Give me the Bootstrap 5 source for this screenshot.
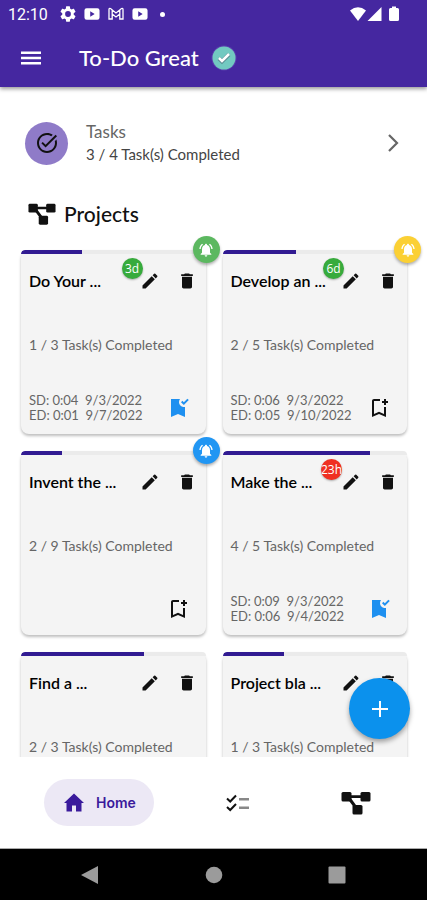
<!DOCTYPE html>
<html lang="en">
<head>
<meta charset="utf-8">
<meta name="viewport" content="width=device-width, initial-scale=1">
<title>To-Do Great</title>
<link href="https://cdn.jsdelivr.net/npm/bootstrap@5.3.0/dist/css/bootstrap.min.css" rel="stylesheet">
<style>
  body { font-family: Lato, "Open Sans", sans-serif; background: #fff; color: #111; }
  svg { display: block; fill: currentColor; flex: none; }
  .i-16 { width: 16px; height: 16px; }
  .i-20 { width: 20px; height: 20px; }
  .i-24 { width: 24px; height: 24px; }
  .i-28 { width: 28px; height: 28px; }
  .i-30 { width: 30px; height: 30px; }
  .plain { border: 0; background: none; padding: 0; color: inherit; }

  .app-head { background: #4527a0; color: #fff; box-shadow: 0 2px 4px rgba(0,0,0,.4); z-index: 2; }
  .status { height: 28px; padding: 0 25px 0 8px; font: 16px Roboto, sans-serif; }
  .status-icons { gap: 8px; margin-left: 12px; }
  .dot { width: 5px; height: 5px; }
  .toolbar { height: 59px; padding: 0 19px; }
  .app-title { font-size: 22px; line-height: 28px; margin: 0 12px 0 36px; font-weight: 500; }
  .logo { width: 26px; height: 26px; }

  .tasks-link { padding: 34px 20px 35px 25px; color: #555; }
  .tasks-disc { width: 43px; height: 43px; background: #8f7bc8; color: #111; margin-right: 18px; }
  .tasks-name { font-size: 17px; line-height: 22px; color: #666; }
  .tasks-count { font-size: 15px; line-height: 22px; color: #444; }
  .projects-title { padding: 0 28px; font-size: 21px; line-height: 28px; font-weight: 500; gap: 8px; }

  .scroller { min-height: 0; overflow-y: auto; scrollbar-width: none; padding: 22px 20px 16px 21px; }
  .scroller::-webkit-scrollbar { display: none; }
  .scroller > .row { --bs-gutter-x: 17px; --bs-gutter-y: 17px; }
  .project { min-height: 184px; background: #f4f4f4; border-radius: 8px; box-shadow: 0 2px 3px rgba(0,0,0,.26); }
  .project .progress { height: 4px; border-radius: 4px 4px 0 0; background: #ebebeb; }
  .project .progress-bar { background: #311b92; border-radius: 4px 0 0 0; }
  .project-top { padding: 15px 9px 0 8px; }
  .project-name { font-size: 16px; line-height: 24px; font-weight: 600; margin: 0; color: #000; }
  .actions { gap: 17px; }
  .project-count { font-size: 14px; line-height: 20px; color: #666; padding: 0 8px; margin: 42px 0 0; }
  .project-foot { padding: 0 16px 11px 8px; min-height: 41px; }
  .dates { font-size: 13px; line-height: 15px; color: #666; margin: 0; white-space: pre; }
  .blue { color: #1e90f0; }
  .bell { width: 27px; height: 27px; top: -14px; right: -14px; color: #fff; box-shadow: 0 2px 3px rgba(0,0,0,.3); z-index: 1; }
  .bell-green { background: #5cb860; }
  .bell-yellow { background: #fbd034; }
  .bell-blue { background: #2196f3; }
  .due { width: 21px; height: 21px; top: 8px; right: 63px; color: #fff; background: #37ab3c; font: 12px "Open Sans", Roboto, sans-serif; box-shadow: 0 1px 2px rgba(0,0,0,.3); overflow: hidden; }
  .due-red { background: #ef2f22; right: 65px; }

  .fab { width: 61px; height: 61px; right: 17px; bottom: 18px; background: #0b91ed; color: #fff; box-shadow: 0 3px 5px rgba(0,0,0,.35); z-index: 3; }
  .tabs { height: 92px; padding: 0 38px 0 44px; border-bottom: 1px solid #aaa; }
  .tabs .plain { height: 47px; padding: 0 18px; border-radius: 24px; }
  .tabs .home-tab { background: #ece8f5; color: #3a1a9c; font: 600 14px Inter, Roboto, sans-serif; gap: 10px; }
  .sysbar { height: 51px; background: #000; color: #9b9b9b; padding: 0 28px; }
</style>
<script src="https://cdn.jsdelivr.net/npm/bootstrap@5.3.0/dist/js/bootstrap.bundle.min.js" defer></script>
</head>
<body class="vh-100 d-flex flex-column overflow-hidden">

<svg class="d-none" aria-hidden="true">
  <symbol id="edit" viewBox="0 0 24 24"><path d="M3 17.25V21h3.75L17.81 9.94l-3.75-3.75L3 17.25zM20.71 7.04c.39-.39.39-1.02 0-1.41l-2.34-2.34a1 1 0 0 0-1.41 0l-1.83 1.83 3.75 3.75 1.83-1.83z"/></symbol>
  <symbol id="trash" viewBox="0 0 24 24"><path d="M6 19c0 1.1.9 2 2 2h8c1.1 0 2-.9 2-2V7H6v12zM19 4h-3.5l-1-1h-5l-1 1H5v2h14V4z"/></symbol>
  <symbol id="ring" viewBox="0 0 24 24"><path d="M7.58 4.08L6.15 2.65C3.75 4.48 2.17 7.3 2.03 10.5h2c.15-2.65 1.51-4.97 3.55-6.42zm12.39 6.42h2c-.15-3.2-1.73-6.02-4.12-7.85l-1.42 1.43c2.02 1.45 3.39 3.77 3.54 6.42zM18 11c0-3.07-1.64-5.64-4.5-6.32V4c0-.83-.67-1.5-1.5-1.5s-1.5.67-1.5 1.5v.68C7.63 5.36 6 7.92 6 11v5l-2 2v1h16v-1l-2-2v-5zm-6 11c1.1 0 2-.9 2-2h-4c0 1.1.9 2 2 2z"/></symbol>
  <symbol id="saved" viewBox="0 0 24 24"><path d="M19 21l-7-3-7 3V3h9c-.63.84-1 1.87-1 3 0 2.76 2.24 5 5 5 .34 0 .68-.03 1-.1V21zM17.83 9L15 6.17l1.41-1.41 1.41 1.41 3.54-3.54 1.41 1.41L17.83 9z"/></symbol>
  <symbol id="save" viewBox="0 0 24 24"><path d="M17 11v6.97l-5-2.14-5 2.14V5h6V3H7c-1.1 0-2 .9-2 2v16l7-3 7 3V11h-2zm4-4h-2v2h-2V7h-2V5h2V3h2v2h2v2z"/></symbol>
  <symbol id="tree" viewBox="0 0 30 24"><rect x=".5" y="1" width="10" height="9.500" rx="1.500"/><rect x="19.500" y="1" width="10" height="9.500" rx="1.500"/><rect x="11.500" y="14" width="10" height="9.500" rx="1.500"/><path d="M8 4.300h14v2.600H8zM6.300 7.500l2.600-1.700 7 9.500-2.600 1.700z"/></symbol>
  <symbol id="tube" viewBox="0 0 18 14"><path fill-rule="evenodd" d="M3 .5h12a2.500 2.500 0 0 1 2.500 2.500v8a2.500 2.500 0 0 1-2.500 2.500H3A2.500 2.500 0 0 1 .5 11V3A2.500 2.500 0 0 1 3 .5zM7 4v6l5-3z"/></symbol>
</svg>

<header class="app-head position-relative flex-shrink-0">
  <div class="status d-flex align-items-center">
    <span>12:10</span>
    <div class="status-icons d-flex align-items-center">
      <svg class="i-16" viewBox="2 2 20 20"><path d="M19.14 12.94c.04-.3.06-.61.06-.94s-.02-.64-.07-.94l2.03-1.58a.49.49 0 0 0 .12-.61l-1.92-3.32a.49.49 0 0 0-.59-.22l-2.390.96c-.5-.38-1.030-.7-1.620-.94L14.400 2.810A.48.48 0 0 0 13.920 2.400h-3.840c-.24 0-.43.17-.47.41L9.250 5.350c-.59.24-1.130.57-1.620.94L5.240 5.330a.49.49 0 0 0-.59.22L2.740 8.870c-.12.21-.08.47.12.61l2.030 1.580c-.05.3-.09.63-.09.94s.02.64.07.94l-2.030 1.580a.49.49 0 0 0-.12.61l1.920 3.320c.12.22.37.29.59.22l2.390-.96c.5.38 1.030.7 1.620.94l.36 2.540c.05.24.24.41.48.41h3.840c.24 0 .44-.17.47-.41l.36-2.540c.59-.24 1.130-.56 1.620-.94l2.390.96c.22.08.47 0 .59-.22l1.920-3.320a.49.49 0 0 0-.12-.61l-2.010-1.580zM12 15.600a3.600 3.600 0 1 1 0-7.200 3.600 3.600 0 0 1 0 7.200z"/></svg>
      <svg class="i-16"><use href="#tube"/></svg>
      <svg class="i-16" viewBox="0 0 16 16"><path fill="none" stroke="currentColor" stroke-width="1.300" d="M1 13V3.500Q1 2 2.500 2.500L8 7l5.500-4.500Q15 2 15 3.500V13h-3.200V8L8 11 4.200 8v5zM4.200 4v4M11.800 4v4"/></svg>
      <svg class="i-16"><use href="#tube"/></svg>
      <span class="dot rounded-circle bg-white ms-1"></span>
    </div>
    <div class="d-flex align-items-center ms-auto">
      <svg class="i-16" viewBox="0 0 16 16"><path d="M0 4.500Q8-2 16 4.500L8 15z"/></svg>
      <svg class="i-16" viewBox="0 0 16 16"><path d="M15.500 1v14H1.500z"/></svg>
      <svg class="i-16 ms-1" viewBox="0 0 16 16"><path d="M4.500 2H6V.5h4V2h1.500q1.500 0 1.500 1.500v10q0 1.500-1.500 1.500h-7Q3 15 3 13.500v-10Q3 2 4.500 2z"/></svg>
    </div>
  </div>
  <div class="toolbar d-flex align-items-center">
    <button class="plain" aria-label="Menu"><svg class="i-24" viewBox="0 0 24 24"><path d="M2 18.500h20v-2.500H2zM2 13.200h20v-2.400H2zM2 5.500V8h20V5.500z"/></svg></button>
    <h1 class="app-title">To-Do Great</h1>
    <svg class="logo" viewBox="0 0 26 26"><circle cx="13" cy="13" r="12.500" fill="#5b3fae"/><circle cx="13" cy="13" r="11.500" fill="#72c9c1"/><path d="M8 13.500l3 3 7-7" fill="none" stroke="#5d8f96" stroke-width="4"/><path d="M8 13l3 3 7-7" fill="none" stroke="#fff" stroke-width="2.500"/></svg>
  </div>
</header>

<a href="#tasks" class="tasks-link d-flex align-items-center text-decoration-none flex-shrink-0">
  <span class="tasks-disc rounded-circle d-flex align-items-center justify-content-center"><svg class="i-24" viewBox="0 0 24 24"><path d="M22 5.180L10.590 16.600l-4.240-4.240 1.410-1.410 2.830 2.830 10-10L22 5.180zm-2.210 5.040c.13.57.21 1.170.21 1.780 0 4.420-3.580 8-8 8s-8-3.580-8-8 3.580-8 8-8c1.580 0 3.040.46 4.280 1.250l1.440-1.440C16.100 2.670 14.130 2 12 2 6.480 2 2 6.480 2 12s4.480 10 10 10 10-4.480 10-10c0-1.190-.22-2.330-.6-3.390l-1.610 1.610z"/></svg></span>
  <span class="d-flex flex-column">
    <span class="tasks-name">Tasks</span>
    <span class="tasks-count">3 / 4 Task(s) Completed</span>
  </span>
  <svg class="i-28 ms-auto" viewBox="0 0 28 28"><path d="M10 6l8 8-8 8" fill="none" stroke="#666" stroke-width="2.200"/></svg>
</a>

<h2 class="projects-title d-flex align-items-center mb-0 flex-shrink-0"><svg class="i-28"><use href="#tree"/></svg>Projects</h2>

<div class="position-relative d-flex flex-column flex-fill overflow-hidden">
<main class="scroller flex-fill">
  <div class="row row-cols-2 row-cols-md-3 row-cols-lg-4 mt-0">
    <div class="col mt-0"><article class="project position-relative d-flex flex-column">
      <div class="progress"><div class="progress-bar" style="width:33.3%"></div></div>
      <span class="bell bell-green position-absolute rounded-circle d-flex align-items-center justify-content-center"><svg class="i-16"><use href="#ring"/></svg></span>
      <span class="due position-absolute rounded-circle d-flex align-items-center justify-content-center">3d</span>
      <div class="project-top d-flex align-items-center justify-content-between"><h3 class="project-name">Do Your ...</h3><div class="actions d-flex"><button class="plain" aria-label="Edit"><svg class="i-20"><use href="#edit"/></svg></button><button class="plain" aria-label="Delete"><svg class="i-20"><use href="#trash"/></svg></button></div></div>
      <p class="project-count">1 / 3 Task(s) Completed</p>
      <div class="project-foot d-flex align-items-center justify-content-between mt-auto"><p class="dates">SD: 0:04  9/3/2022
ED: 0:01  9/7/2022</p><button class="plain blue ms-auto" aria-label="Bookmarked"><svg class="i-24"><use href="#saved"/></svg></button></div>
    </article></div>
    <div class="col mt-0"><article class="project position-relative d-flex flex-column">
      <div class="progress"><div class="progress-bar" style="width:40%"></div></div>
      <span class="bell bell-yellow position-absolute rounded-circle d-flex align-items-center justify-content-center"><svg class="i-16"><use href="#ring"/></svg></span>
      <span class="due position-absolute rounded-circle d-flex align-items-center justify-content-center">6d</span>
      <div class="project-top d-flex align-items-center justify-content-between"><h3 class="project-name">Develop an ...</h3><div class="actions d-flex"><button class="plain" aria-label="Edit"><svg class="i-20"><use href="#edit"/></svg></button><button class="plain" aria-label="Delete"><svg class="i-20"><use href="#trash"/></svg></button></div></div>
      <p class="project-count">2 / 5 Task(s) Completed</p>
      <div class="project-foot d-flex align-items-center justify-content-between mt-auto"><p class="dates">SD: 0:06  9/3/2022
ED: 0:05  9/10/2022</p><button class="plain ms-auto" aria-label="Add bookmark"><svg class="i-24"><use href="#save"/></svg></button></div>
    </article></div>
    <div class="col"><article class="project position-relative d-flex flex-column">
      <div class="progress"><div class="progress-bar" style="width:22.2%"></div></div>
      <span class="bell bell-blue position-absolute rounded-circle d-flex align-items-center justify-content-center"><svg class="i-16"><use href="#ring"/></svg></span>
      <div class="project-top d-flex align-items-center justify-content-between"><h3 class="project-name">Invent the ...</h3><div class="actions d-flex"><button class="plain" aria-label="Edit"><svg class="i-20"><use href="#edit"/></svg></button><button class="plain" aria-label="Delete"><svg class="i-20"><use href="#trash"/></svg></button></div></div>
      <p class="project-count">2 / 9 Task(s) Completed</p>
      <div class="project-foot d-flex align-items-center justify-content-between mt-auto"><button class="plain ms-auto" aria-label="Add bookmark"><svg class="i-24"><use href="#save"/></svg></button></div>
    </article></div>
    <div class="col"><article class="project position-relative d-flex flex-column">
      <div class="progress"><div class="progress-bar" style="width:80%"></div></div>
      <span class="due due-red position-absolute rounded-circle d-flex align-items-center justify-content-center">23h</span>
      <div class="project-top d-flex align-items-center justify-content-between"><h3 class="project-name">Make the ...</h3><div class="actions d-flex"><button class="plain" aria-label="Edit"><svg class="i-20"><use href="#edit"/></svg></button><button class="plain" aria-label="Delete"><svg class="i-20"><use href="#trash"/></svg></button></div></div>
      <p class="project-count">4 / 5 Task(s) Completed</p>
      <div class="project-foot d-flex align-items-center justify-content-between mt-auto"><p class="dates">SD: 0:09  9/3/2022
ED: 0:06  9/4/2022</p><button class="plain blue ms-auto" aria-label="Bookmarked"><svg class="i-24"><use href="#saved"/></svg></button></div>
    </article></div>
    <div class="col"><article class="project position-relative d-flex flex-column">
      <div class="progress"><div class="progress-bar" style="width:66.7%"></div></div>
      <div class="project-top d-flex align-items-center justify-content-between"><h3 class="project-name">Find a ...</h3><div class="actions d-flex"><button class="plain" aria-label="Edit"><svg class="i-20"><use href="#edit"/></svg></button><button class="plain" aria-label="Delete"><svg class="i-20"><use href="#trash"/></svg></button></div></div>
      <p class="project-count">2 / 3 Task(s) Completed</p>
    </article></div>
    <div class="col"><article class="project position-relative d-flex flex-column">
      <div class="progress"><div class="progress-bar" style="width:33.3%"></div></div>
      <div class="project-top d-flex align-items-center justify-content-between"><h3 class="project-name">Project bla ...</h3><div class="actions d-flex"><button class="plain" aria-label="Edit"><svg class="i-20"><use href="#edit"/></svg></button><button class="plain" aria-label="Delete"><svg class="i-20"><use href="#trash"/></svg></button></div></div>
      <p class="project-count">1 / 3 Task(s) Completed</p>
    </article></div>
  </div>
</main>
<button class="fab plain position-absolute rounded-circle d-flex align-items-center justify-content-center" aria-label="Add project"><svg class="i-24" viewBox="0 0 24 24"><path d="M4 11h7V4h2v7h7v2h-7v7h-2v-7H4z"/></svg></button>
</div>

<nav class="tabs d-flex align-items-center justify-content-between flex-shrink-0">
  <button class="plain home-tab d-flex align-items-center"><svg class="i-24" viewBox="0 0 24 24"><path d="M10 20.500v-6h4v6h5.500V12H22L12 2.500 2 12h2.500v8.500z"/></svg>Home</button>
  <button class="plain" aria-label="Tasks"><svg class="i-24" viewBox="1 0 24 24"><path d="M24 7H14v2.500h10zM24 15.500H14V18h10z" fill="#888"/><path d="M2 7.500l3.200 3L11 4.500M2 16l3.200 3L11 13" fill="none" stroke="#111" stroke-width="2"/></svg></button>
  <button class="plain" aria-label="Projects"><svg class="i-30"><use href="#tree"/></svg></button>
</nav>

<footer class="sysbar d-flex align-items-center flex-shrink-0">
  <button class="plain flex-fill w-100 d-flex justify-content-center" aria-label="Back"><svg class="i-20" viewBox="0 0 20 20"><path d="M1 10L18 1v18z"/></svg></button>
  <button class="plain flex-fill w-100 d-flex justify-content-center" aria-label="Home screen"><svg class="i-20" viewBox="0 0 20 20"><circle cx="10" cy="10" r="8.300"/></svg></button>
  <button class="plain flex-fill w-100 d-flex justify-content-center" aria-label="Recent apps"><svg class="i-20" viewBox="0 0 20 20"><rect x="1.500" y="1.500" width="17" height="17" rx="1"/></svg></button>
</footer>
</body>
</html>
